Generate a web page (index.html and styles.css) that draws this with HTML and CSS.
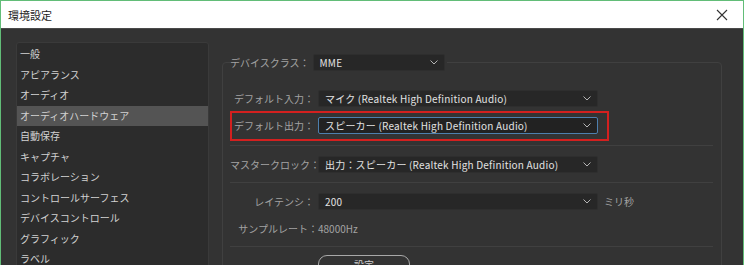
FILE: index.html
```html
<!DOCTYPE html>
<html lang="ja">
<head>
    <meta charset="UTF-8">
    <title>環境設定</title>
    <link rel="stylesheet" href="styles.css">
</head>
<body>
    <div class="window">
        <div class="titlebar">
            <span class="title">環境設定</span>
            <svg class="close" width="12" height="12" viewBox="0 0 12 12">
                <path d="M1 1 L11 11 M11 1 L1 11" stroke="#333" stroke-width="1.1" fill="none"/>
            </svg>
        </div>

        <div class="content">
            <ul class="sidebar">
                <li class="nav-item">一般</li>
                <li class="nav-item">アピアランス</li>
                <li class="nav-item">オーディオ</li>
                <li class="nav-item active">オーディオハードウェア</li>
                <li class="nav-item">自動保存</li>
                <li class="nav-item">キャプチャ</li>
                <li class="nav-item">コラボレーション</li>
                <li class="nav-item">コントロールサーフェス</li>
                <li class="nav-item">デバイスコントロール</li>
                <li class="nav-item">グラフィック</li>
                <li class="nav-item">ラベル</li>
            </ul>

            <div class="main">
                <fieldset class="group">
                    <legend class="legend">
                        <span class="label">デバイスクラス：</span>
                        <span class="select select-small">
                            <span>MME</span>
                            <svg class="chevron" width="8" height="5" viewBox="0 0 8 5"><polyline points="0.5,0.5 4,4 7.5,0.5" fill="none" stroke="#b5b5b5" stroke-width="1"/></svg>
                        </span>
                    </legend>

                    <div class="row row-input">
                        <span class="label">デフォルト入力：</span>
                        <span class="select">
                            <span>マイク (Realtek High Definition Audio)</span>
                            <svg class="chevron" width="8" height="5" viewBox="0 0 8 5"><polyline points="0.5,0.5 4,4 7.5,0.5" fill="none" stroke="#b5b5b5" stroke-width="1"/></svg>
                        </span>
                    </div>

                    <div class="highlight">
                        <div class="row">
                            <span class="label">デフォルト出力：</span>
                            <span class="select focused">
                                <span>スピーカー (Realtek High Definition Audio)</span>
                                <svg class="chevron" width="8" height="5" viewBox="0 0 8 5"><polyline points="0.5,0.5 4,4 7.5,0.5" fill="none" stroke="#b5b5b5" stroke-width="1"/></svg>
                            </span>
                        </div>
                    </div>

                    <div class="separator sep-1"></div>

                    <div class="row row-clock">
                        <span class="label">マスタークロック：</span>
                        <span class="select">
                            <span>出力：スピーカー (Realtek High Definition Audio)</span>
                            <svg class="chevron" width="8" height="5" viewBox="0 0 8 5"><polyline points="0.5,0.5 4,4 7.5,0.5" fill="none" stroke="#b5b5b5" stroke-width="1"/></svg>
                        </span>
                    </div>

                    <div class="separator sep-2"></div>

                    <div class="row row-latency">
                        <span class="label">レイテンシ：</span>
                        <span class="select">
                            <span>200</span>
                            <svg class="chevron" width="8" height="5" viewBox="0 0 8 5"><polyline points="0.5,0.5 4,4 7.5,0.5" fill="none" stroke="#b5b5b5" stroke-width="1"/></svg>
                        </span>
                        <span class="unit">ミリ秒</span>
                    </div>

                    <div class="row row-rate">
                        <span class="label">サンプルレート：</span>
                        <span class="value">48000Hz</span>
                    </div>

                    <div class="separator sep-3"></div>

                    <div class="row row-button">
                        <span class="label"></span>
                        <button class="btn">設定</button>
                    </div>
                </fieldset>
            </div>
        </div>
    </div>
</body>
</html>
```

FILE: styles.css
```css
* {
    margin: 0;
    padding: 0;
    box-sizing: border-box;
}

body {
    font-family: "Noto Sans CJK JP", "Noto Sans", sans-serif;
    font-size: 10px;
    background: #333333;
    overflow: hidden;
}

.window {
    width: 744px;
    height: 265px;
    border: 1px solid #62bd78;
    border-bottom: none;
    overflow: hidden;
    display: flex;
    flex-direction: column;
}

.titlebar {
    height: 28px;
    flex-shrink: 0;
    background: #ffffff;
    border-bottom: 1px solid #4a4a4a;
    display: flex;
    align-items: center;
    justify-content: space-between;
    padding: 0 15px 0 7px;
}

.title {
    font-size: 11px;
    color: #222222;
}

.content {
    flex: 1;
    display: flex;
    gap: 13px;
    background: #333333;
    padding-left: 15px;
}

/* left category list */
.sidebar {
    list-style: none;
    width: 193px;
    margin-top: 13px;
    padding-top: 1px;
    background: #2c2c2c;
    border: 1px solid #3a3a3a;
    border-radius: 3px;
    align-self: flex-start;
    height: 240px;
}

.nav-item {
    height: 20.5px;
    line-height: 20.5px;
    padding-left: 3px;
    color: #d2d2d2;
    white-space: nowrap;
}

.nav-item.active {
    background: #545454;
}

/* right settings panel */
.main {
    width: 500px;
    padding-top: 25px;
}

.group {
    border: 1px solid #404040;
    border-radius: 4px;
    padding: 0 7px;
    height: 260px;
}

.legend {
    display: flex;
    align-items: center;
    gap: 3px;
    height: 17px;
    padding-right: 2px;
}

.legend .label {
    width: auto;
}

.label {
    width: 84px;
    flex-shrink: 0;
    text-align: right;
    color: #a3a3a3;
    white-space: nowrap;
}

.row {
    display: flex;
    align-items: center;
    gap: 4px;
    height: 17px;
}

.select {
    width: 280px;
    height: 17px;
    background: #272727;
    border: 1px solid #2e2e2e;
    border-radius: 2px;
    color: #e2e2e2;
    letter-spacing: 0.2px;
    display: flex;
    align-items: center;
    justify-content: space-between;
    padding: 0 6px 0 6px;
    white-space: nowrap;
}

.select-small {
    width: 132px;
}

.select.focused {
    background: #222222;
    border-color: #4d7fae;
}

.chevron {
    flex-shrink: 0;
}

.row-input {
    margin-top: 19px;
}

.highlight {
    width: 379px;
    height: 30px;
    margin-top: 4px;
    border: 2px solid #d3201f;
    padding-top: 4px;
}

.highlight .label {
    width: 82px;
}

.separator {
    height: 1px;
    background: #404040;
    margin-right: 1px;
}

.sep-1 {
    margin-top: 4px;
}

.row-clock {
    margin-top: 10px;
}

.sep-2 {
    margin-top: 9px;
}

.row-latency {
    margin-top: 10px;
}

.unit {
    margin-left: 2px;
    color: #a3a3a3;
}

.row-rate {
    margin-top: 10px;
}

.row-rate .label {
    width: 88px;
}

.value {
    margin-left: -4px;
    color: #a3a3a3;
}

.sep-3 {
    margin-top: 9px;
}

.row-button {
    margin-top: 8px;
    align-items: flex-start;
}

.btn {
    width: 92px;
    height: 19px;
    background: transparent;
    border: 1px solid #a8a8a8;
    border-radius: 9px;
    color: #cfcfcf;
    font-family: inherit;
    font-size: 10px;
}
```
